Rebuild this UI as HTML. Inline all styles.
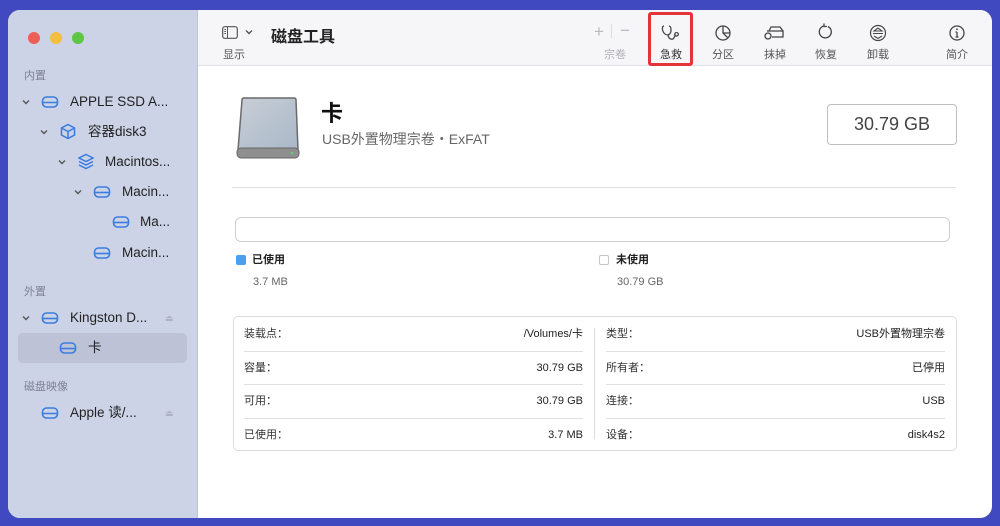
<!DOCTYPE html><html><head><meta charset="utf-8"><style>
*{margin:0;padding:0;box-sizing:border-box}
body{width:1000px;height:526px;background:#4049bf;font-family:"Liberation Sans","Noto Sans CJK SC",sans-serif;position:relative;overflow:hidden;color:#222}
.a{position:absolute;white-space:nowrap;line-height:16px}
#win{position:absolute;left:8px;top:10px;width:984px;height:508px;border-radius:12px;overflow:hidden;background:#fff}
#side{position:absolute;left:0;top:0;width:190px;height:508px;background:#cdd3e7;border-right:1px solid #bfc4d6}
.sec{font-size:11px;color:#7d8193}
.row{font-size:13.5px;color:#222;line-height:18px}
#tb{position:absolute;left:190px;top:0;right:0;height:56px;background:#f6f6f9;border-bottom:1px solid #e2e2e6}
.tl{font-size:11px;color:#555;text-align:center;width:50px}
.ic{position:absolute}
.lbl{font-size:11px;color:#333}
.val{font-size:11px;color:#222;text-align:right}
.hl{position:absolute;height:1px;background:#e0e0e3}
</style></head><body>
<svg width="0" height="0" style="position:absolute"><defs>
<symbol id="dr" viewBox="0 0 18 14"><rect x="1.5" y="2" width="15" height="10" rx="4" fill="none" stroke="#3a7de0" stroke-width="1.6"/><path d="M1.5 7.5 H16.5" stroke="#3a7de0" stroke-width="1.6"/></symbol>
<symbol id="cv" viewBox="0 0 10 10"><path d="M2 3.5 L5 6.5 L8 3.5" fill="none" stroke="#555" stroke-width="1.4"/></symbol>
</defs></svg>
<div id="win">
<div id="side">
<div class="a" style="left:20px;top:22px;width:12px;height:12px;border-radius:6px;background:#ec5f57"></div>
<div class="a" style="left:42px;top:22px;width:12px;height:12px;border-radius:6px;background:#f3bd3d"></div>
<div class="a" style="left:64px;top:22px;width:12px;height:12px;border-radius:6px;background:#5ec645"></div>
<div class="a sec" style="left:16px;top:58px">内置</div>
<svg class="ic" style="left:13px;top:87px" width="10" height="10"><use href="#cv"/></svg>
<svg class="ic" style="left:33px;top:85px" width="18" height="14"><use href="#dr"/></svg>
<div class="a row" style="left:62px;top:83px">APPLE SSD A...</div>
<svg class="ic" style="left:31px;top:117px" width="10" height="10"><use href="#cv"/></svg>
<svg class="ic" style="left:52px;top:113px" width="16" height="17" viewBox="0 0 16 17"><path d="M8 1.5 L14.5 5 V12 L8 15.5 L1.5 12 V5 Z M1.5 5 L8 8.5 L14.5 5 M8 8.5 V15.5" fill="none" stroke="#3a7de0" stroke-width="1.5"/></svg>
<div class="a row" style="left:80px;top:113px">容器disk3</div>
<svg class="ic" style="left:49px;top:147px" width="10" height="10"><use href="#cv"/></svg>
<svg class="ic" style="left:70px;top:143px" width="16" height="17" viewBox="0 0 16 17"><path d="M8 1.5 L15 5 L8 8.5 L1 5 Z M1 8.5 L8 12 L15 8.5 M1 12 L8 15.5 L15 12" fill="none" stroke="#3a7de0" stroke-width="1.5"/></svg>
<div class="a row" style="left:97px;top:143px">Macintos...</div>
<svg class="ic" style="left:65px;top:177px" width="10" height="10"><use href="#cv"/></svg>
<svg class="ic" style="left:85px;top:175px" width="18" height="14"><use href="#dr"/></svg>
<div class="a row" style="left:114px;top:173px">Macin...</div>
<svg class="ic" style="left:104px;top:205px" width="18" height="14"><use href="#dr"/></svg>
<div class="a row" style="left:132px;top:203px">Ma...</div>
<svg class="ic" style="left:85px;top:236px" width="18" height="14"><use href="#dr"/></svg>
<div class="a row" style="left:114px;top:234px">Macin...</div>
<div class="a sec" style="left:16px;top:274px">外置</div>
<svg class="ic" style="left:13px;top:303px" width="10" height="10"><use href="#cv"/></svg>
<svg class="ic" style="left:33px;top:301px" width="18" height="14"><use href="#dr"/></svg>
<div class="a row" style="left:62px;top:299px">Kingston D...</div>
<div class="a" style="left:157px;top:300px;font-size:9px;color:#aeb2c0">⏏</div>
<div class="a" style="left:10px;top:323px;width:169px;height:30px;border-radius:5px;background:#bdc2d6"></div>
<svg class="ic" style="left:51px;top:331px" width="18" height="14"><use href="#dr"/></svg>
<div class="a row" style="left:80px;top:329px">卡</div>
<div class="a sec" style="left:16px;top:369px">磁盘映像</div>
<svg class="ic" style="left:33px;top:396px" width="18" height="14"><use href="#dr"/></svg>
<div class="a row" style="left:62px;top:394px">Apple 读/...</div>
<div class="a" style="left:157px;top:395px;font-size:9px;color:#aeb2c0">⏏</div>
</div>
<div id="tb">
<svg class="ic" style="left:24px;top:16px" width="16" height="13" viewBox="0 0 16 13"><rect x="0.7" y="0.7" width="14.6" height="11.6" rx="2" fill="none" stroke="#555" stroke-width="1.2"/><path d="M5.5 1 V12 M2.3 3.5 H4 M2.3 5.5 H4 M2.3 7.5 H4" stroke="#555" stroke-width="1"/></svg>
<svg class="ic" style="left:46px;top:17px" width="10" height="10"><use href="#cv"/></svg>
<div class="a" style="left:25px;top:37px;font-size:11px;color:#555">显示</div>
<div class="a" style="left:73px;top:18px;font-size:16px;font-weight:bold;color:#222;line-height:20px">磁盘工具</div>
<div class="a" style="left:396px;top:13px;font-size:17px;color:#b8b8bd;line-height:18px">+</div>
<div class="a" style="left:413px;top:14px;width:1px;height:14px;background:#ddd"></div>
<div class="a" style="left:422px;top:12px;font-size:17px;color:#b8b8bd;line-height:18px">−</div>
<div class="a tl" style="left:392px;top:37px;color:#b0b0b5">宗卷</div>
<div class="a" style="left:450px;top:2px;width:45px;height:54px;border:3px solid #e5333a;border-radius:3px"></div>
<svg class="ic" style="left:463px;top:14px" width="20" height="18" viewBox="0 0 20 18"><path d="M3 2 Q1 2 1.5 6 Q3 11 7 11 Q10 10 10 6 Q10 2 8 2 M7 11 Q8 16 12 15 Q14 13 14 10 M15.5 8.5 a1.8 1.8 0 1 0 0.1 0" fill="none" stroke="#444" stroke-width="1.3"/></svg>
<div class="a tl" style="left:448px;top:37px;color:#333">急救</div>
<svg class="ic" style="left:516px;top:14px" width="18" height="18" viewBox="0 0 18 18"><circle cx="9" cy="9" r="7" fill="none" stroke="#444" stroke-width="1.3"/><path d="M9 2 V9 L13.5 13.5 M9 9 H16" fill="none" stroke="#444" stroke-width="1.3"/></svg>
<div class="a tl" style="left:500px;top:37px">分区</div>
<svg class="ic" style="left:565px;top:15px" width="22" height="16" viewBox="0 0 22 16"><path d="M6 6 L8 2 H17 L20 6 V12 H9 M4 6 H20" fill="none" stroke="#444" stroke-width="1.3"/><circle cx="5" cy="11" r="3" fill="none" stroke="#444" stroke-width="1.3"/></svg>
<div class="a tl" style="left:552px;top:37px">抹掉</div>
<svg class="ic" style="left:620px;top:13px" width="16" height="18" viewBox="0 0 16 18"><path d="M6 3 A6 6 0 1 0 10 3.5 M6 0.5 L6 3.5 L9 3.5" fill="none" stroke="#444" stroke-width="1.3"/></svg>
<div class="a tl" style="left:603px;top:37px">恢复</div>
<svg class="ic" style="left:671px;top:14px" width="18" height="18" viewBox="0 0 18 18"><circle cx="9" cy="9" r="7.5" fill="none" stroke="#444" stroke-width="1.2"/><path d="M5 7 L9 4 L13 7 Z M4 9.5 H14 M5 12 L9 14.5 L13 12" fill="none" stroke="#444" stroke-width="1.1"/></svg>
<div class="a tl" style="left:655px;top:37px">卸载</div>
<svg class="ic" style="left:750px;top:14px" width="18" height="18" viewBox="0 0 18 18"><circle cx="9" cy="9" r="7" fill="none" stroke="#444" stroke-width="1.3"/><path d="M9 8 V13 M7.5 13 H10.5 M7.5 8 H9" fill="none" stroke="#444" stroke-width="1.3"/><circle cx="9" cy="5.3" r="0.9" fill="#444"/></svg>
<div class="a tl" style="left:734px;top:37px">简介</div>
</div>
<svg class="ic" style="left:228px;top:86px" width="64" height="64" viewBox="0 0 64 64"><defs><linearGradient id="g" x1="0" y1="0" x2="1" y2="1"><stop offset="0" stop-color="#c9ced6"/><stop offset="1" stop-color="#a9b8c8"/></linearGradient></defs><path d="M8 2 H58 Q60 2 60 4 L62 54 H2 L6 4 Q6 2 8 2 Z" fill="url(#g)" stroke="#6a6a6a" stroke-width="1.5"/><rect x="1" y="52" width="62" height="10" rx="4" fill="#8f8f8f" stroke="#666" stroke-width="1"/><circle cx="56" cy="57" r="1.3" fill="#5dd36a"/></svg>
<div class="a" style="left:313px;top:91px;font-size:22px;font-weight:bold;color:#111;line-height:26px">卡</div>
<div class="a" style="left:314px;top:120px;font-size:14px;color:#666;line-height:18px">USB外置物理宗卷・ExFAT</div>
<div class="a" style="left:819px;top:94px;width:130px;height:41px;border:1px solid #bdbdc2;border-radius:4px;font-size:18px;color:#444;text-align:center;line-height:39px">30.79 GB</div>
<div class="hl" style="left:224px;top:177px;width:724px"></div>
<div class="a" style="left:227px;top:207px;width:715px;height:25px;border:1px solid #cfcfd4;border-radius:6px"></div>
<div class="a" style="left:228px;top:245px;width:10px;height:10px;border-radius:2px;background:#4a9ff0"></div>
<div class="a" style="left:244px;top:242px;font-size:11px;font-weight:bold;color:#222">已使用</div>
<div class="a" style="left:245px;top:264px;font-size:11px;color:#666">3.7 MB</div>
<div class="a" style="left:591px;top:245px;width:10px;height:10px;border-radius:2px;border:1px solid #c5c5c9"></div>
<div class="a" style="left:608px;top:242px;font-size:11px;font-weight:bold;color:#222">未使用</div>
<div class="a" style="left:609px;top:264px;font-size:11px;color:#666">30.79 GB</div>
<div class="a" style="left:225px;top:306px;width:724px;height:135px;border:1px solid #dcdce0;border-radius:5px"></div>
<div class="a" style="left:586px;top:318px;width:1px;height:111px;background:#dcdce0"></div>
<div class="hl" style="left:236px;top:341px;width:339px"></div>
<div class="hl" style="left:236px;top:374px;width:339px"></div>
<div class="hl" style="left:236px;top:408px;width:339px"></div>
<div class="hl" style="left:598px;top:341px;width:339px"></div>
<div class="hl" style="left:598px;top:374px;width:339px"></div>
<div class="hl" style="left:598px;top:408px;width:339px"></div>
<div class="a lbl" style="left:236px;top:316px">装载点：</div><div class="a val" style="left:375px;top:316px;width:200px">/Volumes/卡</div>
<div class="a lbl" style="left:236px;top:350px">容量：</div><div class="a val" style="left:375px;top:350px;width:200px">30.79 GB</div>
<div class="a lbl" style="left:236px;top:383px">可用：</div><div class="a val" style="left:375px;top:383px;width:200px">30.79 GB</div>
<div class="a lbl" style="left:236px;top:417px">已使用：</div><div class="a val" style="left:375px;top:417px;width:200px">3.7 MB</div>
<div class="a lbl" style="left:598px;top:316px">类型：</div><div class="a val" style="left:737px;top:316px;width:200px">USB外置物理宗卷</div>
<div class="a lbl" style="left:598px;top:350px">所有者：</div><div class="a val" style="left:737px;top:350px;width:200px">已停用</div>
<div class="a lbl" style="left:598px;top:383px">连接：</div><div class="a val" style="left:737px;top:383px;width:200px">USB</div>
<div class="a lbl" style="left:598px;top:417px">设备：</div><div class="a val" style="left:737px;top:417px;width:200px">disk4s2</div>
</div>
</body></html>
